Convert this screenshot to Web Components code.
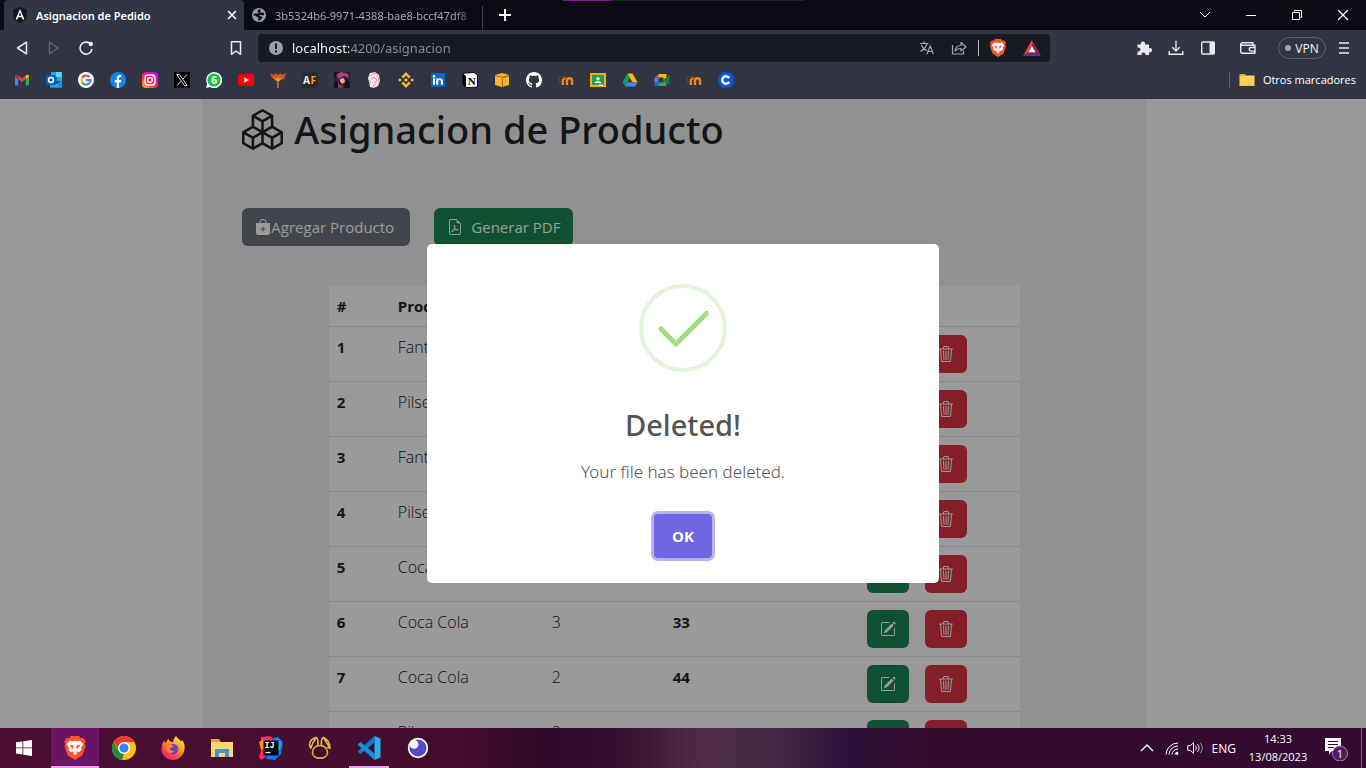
<!DOCTYPE html>
<html lang="es">
<head>
<meta charset="utf-8">
<title>Asignacion de Pedido</title>
<style>
  html, body { margin: 0; height: 100%; }
  body { font-family: "Open Sans", "Noto Sans", sans-serif; overflow: hidden; background: #999; }
</style>
</head>
<body>
<desktop-shell>
  <browser-tabs slot="top"></browser-tabs>
  <browser-toolbar slot="top"></browser-toolbar>
  <bookmark-bar slot="top"></bookmark-bar>
  <app-page slot="page">
    <product-table></product-table>
  </app-page>
  <success-dialog slot="page" heading="Deleted!">Your file has been deleted.</success-dialog>
  <task-bar slot="bottom"></task-bar>
</desktop-shell>

<script>
const ICONS = {
  boxes: ['0 0 16 16', '<path fill="currentColor" d="M7.752.066a.5.5 0 0 1 .496 0l3.75 2.143a.5.5 0 0 1 .252.434v3.995l3.498 2A.5.5 0 0 1 16 9.07v4.286a.5.5 0 0 1-.252.434l-3.75 2.143a.5.5 0 0 1-.496 0l-3.502-2-3.502 2.001a.5.5 0 0 1-.496 0l-3.75-2.143A.5.5 0 0 1 0 13.357V9.071a.5.5 0 0 1 .252-.434L3.75 6.638V2.643a.5.5 0 0 1 .252-.434zM4.25 7.504 1.508 9.071l2.742 1.567 2.742-1.567zM7.5 9.933l-2.75 1.571v3.134l2.75-1.571zm1 3.134 2.75 1.571v-3.134L8.5 9.933zm.508-3.996 2.742 1.567 2.742-1.567-2.742-1.567zm2.242-2.433V3.504L8.5 5.076V8.21zM7.5 8.21V5.076L4.75 3.504v3.134zM5.258 2.643 8 4.21l2.742-1.567L8 1.076zM15 9.933l-2.75 1.571v3.134L15 13.067zM3.75 14.638v-3.134L1 9.933v3.134z"/>'],
  bag: ['0 0 16 16', '<path fill="currentColor" fill-rule="evenodd" d="M10.5 3.5a2.5 2.5 0 0 0-5 0V4h5zm1 0V4H15v10a2 2 0 0 1-2 2H3a2 2 0 0 1-2-2V4h3.500v-.5a3.500 3.500 0 1 1 7 0M8.500 8a.5.5 0 0 0-1 0v1.500H6a.5.5 0 0 0 0 1h1.500V12a.5.5 0 0 0 1 0v-1.500H10a.5.5 0 0 0 0-1H8.500z"/>'],
  pdf: ['0 0 16 16', '<path fill="currentColor" d="M14 14V4.500L9.500 0H4a2 2 0 0 0-2 2v12a2 2 0 0 0 2 2h8a2 2 0 0 0 2-2M9.500 3A1.500 1.500 0 0 0 11 4.500h2V14a1 1 0 0 1-1 1H4a1 1 0 0 1-1-1V2a1 1 0 0 1 1-1h5.500z"/><path fill="none" stroke="currentColor" stroke-width="1" d="M4.900 13c1.200-.8 2.700-3.800 3-5.900.1-1.400-.9-1.400-.7 0 .3 1.900 1.700 3.600 3.300 4.100 1 .3 1-.7 0-.8-1.800 0-3.900.5-5 1.200-1 .6-1.200 1.500-.6 1.400z"/>'],
  edit: ['0 0 16 16', '<path fill="currentColor" d="M15.502 1.940a.5.5 0 0 1 0 .706L14.459 3.690l-2-2L13.502.646a.5.5 0 0 1 .707 0l1.293 1.293zm-1.750 2.456-2-2L4.939 9.210a.5.5 0 0 0-.121.196l-.805 2.414a.25.25 0 0 0 .316.316l2.414-.805a.5.5 0 0 0 .196-.12l6.813-6.814z"/><path fill="currentColor" d="M1 13.500A1.500 1.500 0 0 0 2.500 15h11a1.500 1.500 0 0 0 1.500-1.500v-6a.5.5 0 0 0-1 0v6a.5.5 0 0 1-.5.5h-11a.5.5 0 0 1-.5-.5v-11a.5.5 0 0 1 .5-.5H9a.5.5 0 0 0 0-1H2.500A1.500 1.500 0 0 0 1 2.500z"/>'],
  trash: ['0 0 16 16', '<path fill="currentColor" d="M6.500 1h3a.5.5 0 0 1 .5.5v1H6v-1a.5.5 0 0 1 .5-.5M11 2.500v-1A1.500 1.500 0 0 0 9.500 0h-3A1.500 1.500 0 0 0 5 1.500v1H1.500a.5.5 0 0 0 0 1h.538l.853 10.660A2 2 0 0 0 4.885 16h6.230a2 2 0 0 0 1.994-1.840l.853-10.660h.538a.5.5 0 0 0 0-1zm1.958 1-.846 10.580a1 1 0 0 1-.997.92h-6.230a1 1 0 0 1-.997-.92L3.042 3.500zm-7.487 1a.5.5 0 0 1 .528.47l.5 8.500a.5.5 0 0 1-.998.06L5 5.030a.5.5 0 0 1 .47-.53Zm5.058 0a.5.5 0 0 1 .47.53l-.5 8.500a.5.5 0 1 1-.998-.06l.5-8.500a.5.5 0 0 1 .528-.47M8 4.500a.5.5 0 0 1 .5.5v8.500a.5.5 0 0 1-1 0V5a.5.5 0 0 1 .5-.5"/>'],
  angular: ['0 0 16 16', '<path fill="#12151d" d="M8 0l7 2.500-1 10.500-6 3-6-3L1 2.500z"/><path fill="#fff" d="M8 2L3.500 12.500h1.800l.9-2.300h3.600l.9 2.300h1.800zm0 3.300 1.300 3.400H6.700z"/>'],
  globe: ['0 0 16 16', '<circle cx="8" cy="8" r="7" fill="#9a9da5"/><path fill="#0a0b13" d="M8.800 2.200c-2 .6-2.800 1.600-2.300 2.400.4.700 1.300.5 1.200 1.300-.1.900-1.200.7-2 .6C4.500 6.400 3.500 6.700 2.600 7l-.2 1.500c1.600 0 2.700.3 3.300 1.200.5.700 1.800.6 1.900 1.400.1.800-.8 1.200-.6 2.300l1 .2c1.800-.5 2.400-1.900 3.100-2.700.5-.6.2-1.300-.7-1.500-1-.2-1.900 0-2.100-.8-.1-.7.8-1 1.700-.8.900.3 1.600.9 2.600.5l.7-1c-.3-1.200-.9-1.700-1.500-1.800-.9-.1-1.600.5-2.300 0-.8-.7.200-1.200.200-2z"/>'],
  close: ['0 0 16 16', '<path stroke="currentColor" stroke-width="1.600" d="M4 4l8 8M12 4l-8 8"/>'],
  plus: ['0 0 16 16', '<path stroke="currentColor" stroke-width="2" d="M8 2v12M2 8h12"/>'],
  down: ['0 0 16 16', '<path fill="none" stroke="currentColor" d="M3 5l5 5 5-5"/>'],
  min: ['0 0 16 16', '<path stroke="currentColor" d="M3 8.500h10"/>'],
  restore: ['0 0 16 16', '<path fill="none" stroke="currentColor" d="M5.500 5V3.500h7v7H11M3.500 5.500h7v7h-7z"/>'],
  winclose: ['0 0 16 16', '<path stroke="currentColor" stroke-width="1.200" d="M3 3l10 10M13 3L3 13"/>'],
  back: ['0 0 16 16', '<path fill="none" stroke="currentColor" stroke-width="1.500" stroke-linejoin="round" d="M12.500 2.200v11.600L3.500 8z"/>'],
  forward: ['0 0 16 16', '<path fill="none" stroke="#666977" stroke-width="1.300" stroke-linejoin="round" d="M3.500 2.200v11.600l9-5.800z"/>'],
  reload: ['0 0 16 16', '<path fill="none" stroke="currentColor" stroke-width="1.600" d="M11.500 3.200A6 6 0 1 0 14 8.800"/><circle cx="12.800" cy="4" r="2.200" fill="currentColor"/>'],
  bookmark: ['0 0 16 16', '<path fill="none" stroke="currentColor" stroke-width="1.500" stroke-linejoin="round" d="M3.500 1.700h9v12.600L8 11l-4.500 3.300z"/>'],
  info: ['0 0 16 16', '<circle cx="8" cy="8" r="7" fill="#9da1aa"/><path stroke="#181a21" stroke-width="2" d="M8 3.500v5.500M8 10.500v2"/>'],
  translate: ['0 0 16 16', '<path fill="none" stroke="#a6a8ad" stroke-width="1.200" d="M1 3.500h8.500M5.200 1.500v2M2.500 5c1 3 4 5 5.500 5.500M8 4C7 7.500 4 10 1.500 11.500M8 14l3.200-8 3.200 8M9 11.500h4.500"/>'],
  share: ['0 0 16 16', '<path fill="none" stroke="#a6a8ad" stroke-width="1.200" stroke-linejoin="round" d="M1.500 5v9h11v-3M4 11c.5-3.800 2.500-5.500 6-5.500V2.500L15 7l-5 4V8.500c-3 0-4.500.5-6 2.500z"/>'],
  brave: ['0 0 32 36', '<path fill="#fb542b" d="M10 0h12l3 3.500 3.500-.5L32 8l-1.500 4L32 15l-5 14-11 7-11-7L0 15l1.500-3L0 8l3.500-5 3.500.5z"/><path fill="#fff" d="M8 7l5 1 3-.8 3 .8 5-1 4.500 5.500-3.500 5 1 3.500-4.500 3.500-1-1.500-4.500 3-4.500-3-1 1.500L6 21l1-3.500-3.500-5z"/><path fill="#fb542b" d="M8 13l5 .8 1.200 2.200-1.700 4.500L16 23l3.500-2.500-1.700-4.500 1.200-2.200 5-.8-3 4.500-1.500.5.5 2.500-4 3-4-3 .5-2.500-1.500-.5z"/><path fill="#fff" d="M12.500 26l3.500-2 3.500 2-3.500 3z"/>'],
  bat: ['0 0 18 16', '<path fill="#ff4724" d="M9 0v5.500L5.500 12 0 16z"/><path fill="#9e1f63" d="M9 0l9 16-5.500-4L9 5.500z"/><path fill="#662d91" d="M0 16l5.500-4h7L18 16z"/><path fill="#fff" d="M9 6l3.500 6.200h-7z"/>'],
  puzzle: ['0 0 16 16', '<path fill="currentColor" d="M1.500 4.500H5a2.200 2.200 0 1 1 4 0h4v3.700a2.200 2.200 0 1 1 0 4V15H9.300a1.900 1.900 0 1 0-3.600 0H1.500v-3.700a2 2 0 1 0 0-3.600z"/>'],
  download: ['0 0 16 16', '<path fill="none" stroke="currentColor" stroke-width="1.400" d="M8 .8v10M4.300 7.300 8 11l3.700-3.700M1.200 11v3.300h13.600V11"/>'],
  sidebar: ['0 0 16 16', '<rect x="1.700" y="2" width="12.600" height="12" rx="1" fill="none" stroke="currentColor" stroke-width="1.400"/><path fill="currentColor" d="M9.500 2h5v12h-5z"/>'],
  wallet: ['0 0 16 16', '<path fill="none" stroke="currentColor" stroke-width="1.400" stroke-linejoin="round" d="M13 5V2.800H2.200C.5 2.800.5 5.300 2.200 5.300H15v8H2.500c-1 0-1.800-.5-1.800-1.500V4M15 7.500h-4a1.800 1.800 0 0 0 0 3.600h4z"/>'],
  menu: ['0 0 16 16', '<path stroke="currentColor" stroke-width="1.600" d="M3 3h10M3 8h10M3 13h10"/>'],
  folder: ['0 0 16 16', '<path fill="#e8a33a" d="M.5 2h5.500l1.500 1.800H.5z"/><path fill="#ffd257" d="M.5 3.500h15V14h-15z"/><path fill="#f5bd3d" d="M.5 13h15v1h-15z"/>'],
  gmail: ['0 0 16 16', '<path fill="#4285f4" d="M1 4.500 4.200 7v6.500H2a1 1 0 0 1-1-1z"/><path fill="#34a853" d="M15 4.500 11.800 7v6.500H14a1 1 0 0 0 1-1z"/><path fill="#ea4335" d="M4.200 3.500 8 6.400l3.800-2.900v3.700L8 10 4.200 7.200z"/><path fill="#c5221f" d="M1 4.800c0-2 1.700-2.500 3.200-1.300v3.700L1 4.800z"/><path fill="#fbbc04" d="M15 4.800c0-2-1.700-2.500-3.200-1.300v3.700z"/>'],
  outlook: ['0 0 16 16', '<path fill="#28a8ea" d="M5 0h11v9H5z"/><path fill="#50d9ff" d="M10 0h5.500v5H10z"/><path fill="#0f6cbd" d="M5 5h6v5H5z"/><path fill="#1490df" d="M5 15.500 16 8v7.500z"/><path fill="#28a8ea" d="M4 8l12 7.500H4z"/><rect x="0" y="3" width="10" height="10" rx="1" fill="#0364b8"/><circle cx="5" cy="8" r="2.400" fill="none" stroke="#fff" stroke-width="1.500"/>'],
  google: ['0 0 16 16', '<circle cx="8" cy="8" r="8" fill="#fff"/><g fill="none" stroke-width="2.200"><path stroke="#ea4335" d="M4.100 5.700A4.500 4.500 0 0 1 11.300 5"/><path stroke="#fbbc05" d="M4.100 5.700a4.500 4.500 0 0 0 0 4.600"/><path stroke="#34a853" d="M4.100 10.300a4.500 4.500 0 0 0 6.800 1.200"/><path stroke="#4285f4" d="M10.900 11.500A4.500 4.500 0 0 0 12.500 8.100H8"/></g>'],
  facebook: ['0 0 16 16', '<circle cx="8" cy="8" r="8" fill="#1184f4"/><path fill="#fff" d="M6.800 16v-5.500H4.900V8h1.900V6.300c0-2.200 1.200-3.300 3-3.300.8 0 1.400.1 1.400.1v2h-1c-1 0-1.200.6-1.200 1.200V8h2.200l-.4 2.500H9V16z"/>'],
  instagram: ['0 0 16 16', '<defs><linearGradient id="g" x1="0" y1="1" x2=".8" y2="0"><stop offset="0" stop-color="#ffc91f"/><stop offset=".4" stop-color="#ff3d3d"/><stop offset=".7" stop-color="#f50a9b"/><stop offset="1" stop-color="#b414ee"/></linearGradient></defs><rect width="16" height="16" rx="4" fill="url(#g)"/><rect x="3" y="3" width="10" height="10" rx="3" fill="none" stroke="#fff" stroke-width="1.300"/><circle cx="8" cy="8" r="2.400" fill="none" stroke="#fff" stroke-width="1.300"/><circle cx="11" cy="5" r=".7" fill="#fff"/>'],
  x: ['0 0 16 16', '<path fill="#000" d="M0 0h16v16H0z"/><path fill="none" stroke="#ddd" d="M2.800 2.500h2.700l7.700 11h-2.700zM12.800 2.500 9 7M7 9.200l-4 4.300"/>'],
  whatsapp: ['0 0 16 16', '<path fill="#fff" d="M0 16l1.200-4A8 8 0 1 1 4 14.900z"/><circle cx="8" cy="8" r="6.600" fill="#1fbf4c"/><text x="8" y="11.500" text-anchor="middle" font-size="10" font-weight="700" fill="#fff">6</text>'],
  youtube: ['0 0 16 16', '<rect y="2" width="16" height="12" rx="3" fill="#f00"/><path fill="#fff" d="M6.300 5.300 11 8l-4.700 2.700z"/>'],
  palm: ['0 0 16 16', '<path fill="#d9541e" d="M0 1l4 2 1.500-2L8 3l2.500-2L12 3l4-2-2 6-4 1-1 1.500V16H7V9.500L5 8 2 6z"/><path fill="#f59a23" d="M3 5l4 2 1-3 1.500 3L13 5l-4 4H7z"/>'],
  af: ['0 0 16 16', '<rect width="16" height="16" rx="3" fill="#2b2b2b"/><text x="1" y="12" font-size="10" font-weight="700" fill="#eee">A</text><text x="8.500" y="12" font-size="10" font-weight="700" fill="#ffa01e">F</text>'],
  anime: ['0 0 16 16', '<path fill="#3b1a35" d="M0 0h16v16H0z"/><path fill="#a34a75" d="M2 3l5-3 7 2 1 4-5-2-5 3z"/><path fill="#e0a9a6" d="M6 7l4-1 1 4-3 2-2-3z"/><path fill="#181022" d="M0 9l4 1 2 6H0zM12 8l4 2v6h-6zM0 0h3l-1 5-2 2z"/><path fill="#8d2f55" d="M4 7l1 5 4 2-1 2H4z"/>'],
  girl: ['0 0 16 16', '<path fill="#f7e9e6" d="M4 1l5-1 4 3 1 6-2 5-4 2-4-1-1-5-1-4z"/><path fill="none" stroke="#e27b78" stroke-width=".8" d="M4 4l5-3 3 4M5 7l3-2 3 3-2 3M3 8l2 4M10 12l-3 2 2 2M12 5l1 6"/>'],
  binance: ['0 0 16 16', '<g fill="#f3ba2f"><path d="M8 0l4.700 4.700-1.800 1.800L8 3.600 5.100 6.500 3.300 4.700zM8 16l4.700-4.700-1.800-1.800L8 12.400 5.100 9.500l-1.800 1.800zM8 6l2 2-2 2-2-2zM1.800 6.200 3.600 8 1.800 9.800 0 8zM14.200 6.200 16 8l-1.800 1.800L12.400 8z"/></g>'],
  linkedin: ['0 0 16 16', '<rect x="1" y="1" width="14" height="14" rx="1" fill="#0a66c2"/><path fill="#fff" d="M3 6.300h2v6.400H3zM6.300 6.300h2v1c1.200-1.900 4.600-1.500 4.600 1.600v3.800h-2V9.400c0-2-2.600-1.800-2.600 0v3.300h-2z"/><circle cx="4" cy="4.200" r="1.200" fill="#fff"/>'],
  notion: ['0 0 16 16', '<path fill="#fff" stroke="#000" d="M.8 1.200 12 .5l3.500 2.500v11.800l-11 .7-3.700-3.500z"/><path fill="#000" d="M1 1.500 4 4.200v11L1 12z"/><path fill="#fff" d="M4.500 4.500 15 4v10.500l-10.500.6z"/><text x="9.700" y="13" text-anchor="middle" font-family="Liberation Serif, serif" font-size="11" font-weight="700" fill="#000">N</text>'],
  cube: ['0 0 16 16', '<path fill="#f5b52b" d="M1 3l7-2 7 2v10l-7 2-7-2z"/><path fill="#a66a12" d="M8 5.500 15 4v9l-7 2z"/><path fill="#f5b52b" d="M9 6l6-1.200v7.900L9 14.300z"/><path stroke="#a66a12" d="M1 3.700l7 1.500 7-1.500" fill="none"/>'],
  github: ['0 0 16 16', '<path fill="#fff" d="M8 0C3.580 0 0 3.580 0 8c0 3.540 2.290 6.530 5.470 7.590.4.07.55-.17.55-.38 0-.19-.01-.82-.01-1.490-2.010.37-2.530-.49-2.690-.94-.09-.23-.48-.94-.82-1.130-.28-.15-.68-.52-.01-.53.63-.01 1.080.58 1.230.82.72 1.210 1.870.87 2.330.66.07-.52.28-.87.51-1.070-1.780-.2-3.640-.89-3.640-3.950 0-.87.31-1.590.82-2.150-.08-.2-.36-1.020.08-2.120 0 0 .67-.21 2.200.82.64-.18 1.320-.27 2-.27s1.360.09 2 .27c1.530-1.040 2.200-.82 2.200-.82.44 1.100.16 1.920.08 2.120.51.56.82 1.270.82 2.150 0 3.070-1.870 3.750-3.650 3.950.29.25.54.73.54 1.480 0 1.070-.01 1.930-.01 2.200 0 .21.15.46.55.38A8.010 8.010 0 0 0 16 8c0-4.420-3.580-8-8-8"/>'],
  moodle: ['0 0 16 16', '<path fill="none" stroke="#f98012" stroke-width="2.400" d="M4.800 13V7M9 13V8.500c0-3 5-3 5 0V13M5 6.500h2.500"/><path fill="#42413f" d="M0 5.500 7 3l1 1.200-4.500 2.300-2.500-.3z"/><path stroke="#555" stroke-width=".7" d="M1.500 6v4"/>'],
  classroom: ['0 0 16 16', '<path fill="#f4b400" d="M0 1h16v14H0z"/><path fill="#289b58" d="M2 3h12v10H2z"/><circle cx="8" cy="6.700" r="1.700" fill="#fff"/><path fill="#fff" d="M4.500 11c0-2.500 7-2.500 7 0z"/><path fill="#e8e8e8" d="M9 12.500h4V14H9z"/>'],
  drive: ['0 0 16 16', '<path fill="#0f9d58" d="M5.500 1.500 8 5.700 3 14.300.5 10.200z"/><path fill="#ffba00" d="M5.500 1.500h5l5 8.700h-5z"/><path fill="#4285f4" d="M5.500 10.200h10L13 14.500H3z"/>'],
  meet: ['0 0 16 16', '<path fill="#ea4335" d="M4.500 2v4H.5z"/><path fill="#fbbc04" d="M4.500 2h8v3.500L9.500 8V5.500h-5z"/><path fill="#4285f4" d="M.5 5.500h4v5h-4z"/><path fill="#1967d2" d="M.5 10.500h4V14h-3c-1 0-1-1-1-1z"/><path fill="#34a853" d="M4.500 10.500h5V8l3 2.500V14h-8z"/><path fill="#188038" d="M9.500 8l3-2.700v5.400zM12.500 5.500 15.500 3v10l-3-2.500z"/>'],
  coin: ['0 0 16 16', '<circle cx="8" cy="8" r="8" fill="#0a57dc"/><path fill="none" stroke="#fff" stroke-width="2.400" d="M11.200 6.200a3.700 3.700 0 1 0 0 3.600"/>'],
  windows: ['0 0 16 16', '<path fill="#fff" d="M0 2.300 6.500 1.400v6.100H0zM7.300 1.300 16 0v7.500H7.300zM0 8.300h6.500v6.200L0 13.600zM7.300 8.300H16V16l-8.700-1.300z"/>'],
  chrome: ['0 0 24 24', '<circle cx="12" cy="12" r="12" fill="#fbc116"/><path fill="#e33b2e" d="M1.600 6A12 12 0 0 1 22.400 6H12L8 15z"/><path fill="#1e8e3e" d="M1.600 6 7 15l5 3-2 5.900A12 12 0 0 1 1.600 6z"/><circle cx="12" cy="12" r="6" fill="#fff"/><circle cx="12" cy="12" r="4.600" fill="#3b82ea"/>'],
  firefox: ['0 0 24 24', '<defs><linearGradient id="f" x1=".8" y1="0" x2=".2" y2="1"><stop offset="0" stop-color="#fff04a"/><stop offset=".4" stop-color="#ff9a1f"/><stop offset=".75" stop-color="#ff3d4d"/><stop offset="1" stop-color="#e0178c"/></linearGradient></defs><path fill="url(#f)" d="M15 0c1 2 4 3.500 5 5.500.8 0 1-1 .8-2C23.500 7 24 10 23.500 13.500 22.500 19.500 18 24 12 24 5.500 24 .5 19 .5 13c0-4 1.500-6.500 3-8.500l.8 2.700C5.500 6 6 4 7.500 2.500 7.500 4.500 9 6 12 6.300 12.500 3.500 13.500 1.500 15 0z"/><circle cx="12" cy="13" r="5.300" fill="#6a43c4"/><path fill="#ff8a1e" d="M5.500 8.500c3-1 5 0 7 1.500-1 1.500-3 1-3.500 2.500-.3 1.500 1.500 3 4.500 2.500-2 3-8 2.500-8.500-2z"/>'],
  explorer: ['0 0 24 24', '<path fill="#e2a53a" d="M1 3h8l2 3H1z"/><path fill="#ffd968" d="M1 6h22v15H1z"/><path fill="#3f95d8" d="M5 13h14v8h-4v-4H9v4H5z"/>'],
  intellij: ['0 0 24 24', '<path fill="#fe2c6a" d="M2 1l9-1 4 4-7 16-6 4-2-3 2-7z"/><path fill="#ff8d1b" d="M0 6l5-3 3 9-6 2z"/><path fill="#087cfa" d="M14 2l5-1 5 5-2 12-6 6-9-1 2-5z"/><path fill="#17b8e8" d="M17 3l5 3-1 8-4 2z"/><path fill="#000" d="M4.500 4.500h15v15h-15z"/><text x="5.500" y="12.200" font-family="Liberation Mono, monospace" font-size="8.500" font-weight="700" fill="#fff">IJ</text><path fill="#fff" d="M6.500 16h5v1.200h-5z"/>'],
  navicat: ['0 0 24 24', '<g fill="none" stroke="#e5b43b" stroke-width="1.600"><path d="M12 9.500c-4.500 0-7.500 3-7.500 7 0 7.500 15 7.500 15 0 0-4-3-7-7.500-7z"/><path d="M3 12.500C-.5 7.500 3 2.500 8.500 1.500c2 2 1.800 5 1 8M3 12.500c.5-4 2-6.500 5.500-11M13.500 9.500c-.5-4.500 0-7 2-8 4 1.800 6.500 6 6.500 10.500l-3-.5M15.500 1.500c2 3.500 3.500 6 6.500 10.500"/></g>'],
  vscode: ['0 0 24 24', '<path fill="#0a7fd0" d="M17.500 0v6.500L3.500 18 .5 15.500z"/><path fill="#1390de" d="M3.500 6 17.500 17.500V24L.5 8.500z"/><path fill="#2aabf2" d="M17.500 0 23.500 2.500v19L17.500 24z"/>'],
  insomnia: ['0 0 24 24', '<circle cx="12" cy="12" r="10.200" fill="#fff"/><circle cx="12" cy="12" r="8.500" fill="#5849be"/><circle cx="8" cy="8.300" r="4.400" fill="#fff"/>'],
  up: ['0 0 16 16', '<path fill="none" stroke="#fff" stroke-width="1.400" d="M2 11l6-6 6 6"/>'],
  wifi: ['0 0 16 16', '<g fill="none" stroke="#fff"><path d="M2 14.500A12 12 0 0 1 14 3M5 14.500A9 9 0 0 1 14 6M8 14.500A6 6 0 0 1 14 9M10.800 14.500A3.500 3.500 0 0 1 14 12"/></g><circle cx="13" cy="13.500" r="1.400" fill="#fff"/>'],
  speaker: ['0 0 16 16', '<g fill="none" stroke="#fff"><path d="M.7 5.700h2.500l3.300-3v10.600l-3.300-3H.7zM8.500 5.800c1 1.400 1 3 0 4.400M10.500 4.200c2 2.500 2 5 0 7.600"/><path stroke="#999" d="M13 2.500c3 3.600 3 7.400 0 11"/></g>'],
  notice: ['0 0 26 26', '<path fill="#fff" d="M2 3h16v13h-9l-3 3.500V16H2z"/><path stroke="#330b30" d="M5 6.500h10M5 9.500h10M5 12.500h6"/><circle cx="17" cy="18.500" r="7.500" fill="#571863" stroke="#a58aab"/><text x="17" y="22.500" text-anchor="middle" font-size="11" fill="#fff">1</text>']
};

function define(name, html, setup) {
  const tpl = document.createElement('template');
  tpl.innerHTML = '<style>:host,*{box-sizing:border-box}button{font:inherit;color:inherit;background:none;border:0;padding:0;margin:0}a{color:inherit;text-decoration:none}</style>' + html;
  customElements.define(name, class extends HTMLElement {
    connectedCallback() {
      if (this.shadowRoot) return;
      const root = this.attachShadow({ mode: 'open' });
      root.append(tpl.content.cloneNode(true));
      if (setup) setup(this, root);
    }
  });
}

define('ui-icon', `<style>
  :host { display: block; width: 16px; height: 16px; flex: none; }
  svg { display: block; width: 100%; height: 100%; font-family: "Open Sans", sans-serif; }
</style>`, (host, root) => {
  const [box, body] = ICONS[host.getAttribute('name')];
  root.innerHTML += `<svg viewBox="${box}" aria-hidden="true">${body}</svg>`;
});

define('desktop-shell', `<style>
  :host { display: flex; flex-direction: column; height: 100vh; }
  main { flex: 1; min-height: 0; overflow: hidden; position: relative; background: #fff; }
</style>
<slot name="top"></slot><main><slot name="page"></slot></main><slot name="bottom"></slot>`);

define('browser-tabs', `<style>
  :host { display: flex; height: 30px; padding-left: 4px; background: linear-gradient(90deg, #7c1a8c 48px, #20221f 48px) 563px 0 / 241px 1px no-repeat #0a0b13; color: #fff; font-size: 11px; }
  .tab { display: flex; align-items: center; gap: 8px; width: 240px; padding: 0 4px 0 8px; white-space: nowrap; }
  .active { background: #323644; border-radius: 4px 4px 0 0; font-family: "Noto Sans", sans-serif; font-weight: 600; }
  .idle { color: #a7a8ac; border-image: linear-gradient(#0a0b13 7px, #44454b 7px 28px, #0a0b13 28px) 1; border-right: 1px solid; width: 239px; padding: 0 4px 0 7px; font-family: "Noto Sans", sans-serif; }
  .idle span { flex: 1; mask-image: linear-gradient(90deg, #000 88%, transparent); }
  .tab button { margin-left: auto; height: 16px; }
  .new { width: 44px; display: grid; place-items: center; }
  .win { margin-left: auto; display: flex; }
  .win button { width: 46px; display: grid; place-items: center; }
</style>
<div class="tab active"><ui-icon name="angular"></ui-icon><span>Asignacion de Pedido</span><button aria-label="Cerrar"><ui-icon name="close"></ui-icon></button></div>
<div class="tab idle"><ui-icon name="globe"></ui-icon><span>3b5324b6-9971-4388-bae8-bccf47df8</span></div>
<button class="new" aria-label="Nueva"><ui-icon name="plus"></ui-icon></button>
<div class="win"><button aria-label="Buscar"><ui-icon name="down"></ui-icon></button><button aria-label="Minimizar"><ui-icon name="min"></ui-icon></button><button aria-label="Restaurar"><ui-icon name="restore"></ui-icon></button><button aria-label="Cerrar"><ui-icon name="winclose"></ui-icon></button></div>`);

define('browser-toolbar', `<style>
  :host { display: flex; align-items: center; height: 36px; background: #323644; color: #e9e9ec; }
  button { display: block; }
  nav { display: flex; gap: 16px; width: 258px; padding: 0 14px; }
  nav button:last-child { margin-left: auto; }
  .address { flex: 1; display: flex; align-items: center; height: 28px; padding: 0 9px 0 10px; border-radius: 4px; background: #181a21; }
  input { flex: 1; min-width: 0; margin: 0 8px; padding: 0; border: 0; outline: 0; font: 13px/20px "Noto Sans", sans-serif; color: #fff; background: linear-gradient(90deg, #fff 57px, #8c8e94 57px) text; -webkit-text-fill-color: transparent; }
  .actions { display: flex; gap: 16px; align-items: center; }
  hr { width: 1px; height: 16px; border: 0; margin: 0; background: #b8babf; }
  .group { display: flex; align-items: center; gap: 11px; }
  .group .brave { height: 18px; }
  .group .bat { width: 18px; margin-left: 6px; }
  .tools { display: flex; gap: 16px; width: 316px; padding-right: 14px; justify-content: flex-end; align-items: center; }
  .wallet { margin: 0 6px 0 8px; }
  .vpn { display: flex; align-items: center; justify-content: center; gap: 4px; width: 48px; height: 22px; border: 1px solid #5c6070; border-radius: 11px; font-size: 12px; color: #f2f2f4; margin-right: -6px; }
  .vpn::before { content: ""; width: 6px; height: 6px; border-radius: 50%; background: #a4a6b4; }
</style>
<nav><button aria-label="Atras"><ui-icon name="back"></ui-icon></button><button aria-label="Adelante"><ui-icon name="forward"></ui-icon></button><button aria-label="Recargar"><ui-icon name="reload"></ui-icon></button><button aria-label="Marcador"><ui-icon name="bookmark"></ui-icon></button></nav>
<div class="address"><ui-icon name="info"></ui-icon><input aria-label="Direccion" value="localhost:4200/asignacion">
<div class="actions"><ui-icon name="translate"></ui-icon><div class="group"><ui-icon name="share"></ui-icon><hr><ui-icon class="brave" name="brave"></ui-icon><ui-icon class="bat" name="bat"></ui-icon></div></div></div>
<div class="tools"><button aria-label="Extensiones"><ui-icon name="puzzle"></ui-icon></button><button aria-label="Descargas"><ui-icon name="download"></ui-icon></button><button aria-label="Panel"><ui-icon name="sidebar"></ui-icon></button><button class="wallet" aria-label="Cartera"><ui-icon name="wallet"></ui-icon></button><button class="vpn">VPN</button><button aria-label="Menu"><ui-icon name="menu"></ui-icon></button></div>`);

define('bookmark-bar', `<style>
  :host { display: flex; align-items: center; height: 33px; padding: 0 10px 5px 14px; background: #323644; color: #fff; font-size: 12px; }
  nav { display: flex; gap: 16px; }
  nav a { height: 16px; }
  .other { display: flex; align-items: center; gap: 8px; margin-left: auto; padding-left: 9px; height: 16px; border-left: 1px solid #5f6371; font-size: 11px; line-height: 16px; }
</style>
<nav></nav><a class="other" href="#"><ui-icon name="folder"></ui-icon>Otros marcadores</a>`, (host, root) => {
  const names = ['gmail','outlook','google','facebook','instagram','x','whatsapp','youtube','palm','af','anime','girl','binance','linkedin','notion','cube','github','moodle','classroom','drive','meet','moodle','coin'];
  root.querySelector('nav').innerHTML = names.map(n => `<a href="#" aria-label="${n}"><ui-icon name="${n}"></ui-icon></a>`).join('');
});

define('app-page', `<style>
  :host { display: block; padding-right: 17px; color: #212529; }
  .panel { width: 70%; margin: 0 auto; padding: 6px 40px 40px; background: #f2f2f2; }
  h1 { display: flex; align-items: center; gap: 11px; margin: 0 0 55px; font-family: "Noto Sans", sans-serif; font-size: 38px; line-height: 48px; font-weight: 500; white-space: nowrap; }
  h1 ui-icon { width: 41px; height: 41px; }
  .bar { display: flex; gap: 24px; margin-bottom: 40px; }
  button { display: flex; align-items: center; height: 38px; padding: 0 13px; border-radius: 6px; color: #fff; font-size: 15px; font-weight: 400; white-space: nowrap; }
  .add { background: #6c757d; min-width: 168px; }
  .pdf { background: #198754; gap: 8px; }
  .holder { width: 80%; margin: 0 auto; }
</style>
<section class="panel">
  <h1><ui-icon name="boxes"></ui-icon>Asignacion de Producto</h1>
  <div class="bar"><button class="add"><ui-icon name="bag"></ui-icon>Agregar Producto</button><button class="pdf"><ui-icon name="pdf"></ui-icon>Generar PDF</button></div>
  <div class="holder"><slot></slot></div>
</section>`);

define('product-table', `<style>
  :host { display: block; }
  table { width: 100%; table-layout: fixed; border-collapse: separate; border-spacing: 0; background: #fff; font-size: 15px; line-height: 24px; }
  th, td { padding: 8px; border-bottom: 1px solid #dee2e6; text-align: left; vertical-align: top; font-weight: 300; }
  td { font-size: 16px; }
  th, td.total { font-size: 15px; font-weight: 700; }
  .num { width: 61px; } .product { width: 154px; } .count { width: 121px; } .total { width: 194px; }
  .ops { display: flex; gap: 16px; }
  button { display: grid; place-items: center; width: 42px; height: 38px; border-radius: 6px; color: #fff; }
  .edit { background: #198754; } .del { background: #dc3545; }
</style>
<table><thead><tr><th class="num">#</th><th class="product">Producto</th><th class="count"></th><th class="total"></th><th></th></tr></thead><tbody></tbody></table>`, (host, root) => {
  const rows = [['Fanta'], ['Pilsen'], ['Fanta'], ['Pilsen'], ['Coca Cola'], ['Coca Cola', 3, 33], ['Coca Cola', 2, 44], ['Pilsen', 2, 44]];
  root.querySelector('tbody').innerHTML = rows.map(([name, count = '', total = ''], i) => `<tr><th>${i + 1}</th><td>${name}</td><td>${count}</td><td class="total">${total}</td><td><div class="ops"><button class="edit" aria-label="Editar"><ui-icon name="edit"></ui-icon></button><button class="del" aria-label="Eliminar"><ui-icon name="trash"></ui-icon></button></div></td></tr>`).join('');
});

define('success-dialog', `<style>
  :host { position: absolute; inset: 0; display: grid; place-items: center; background: rgba(0, 0, 0, .4); }
  .box { display: flex; flex-direction: column; align-items: center; width: 512px; max-width: 100%; padding: 40px 20px 25px; border-radius: 5px; background: #fff; color: #545454; }
  svg { width: 88px; height: 88px; }
  h2 { margin: 35px 0 15px; font-family: "Noto Sans", sans-serif; font-size: 29px; line-height: 36px; font-weight: 500; }
  p { margin: 0 0 28px; font-family: "Noto Sans", sans-serif; font-size: 17px; line-height: 28px; font-weight: 300; }
  button { width: 58px; height: 44px; border-radius: 4px; background: #7066e0; box-shadow: 0 0 0 3px #b8b3f0; color: #fff; font-size: 15px; font-weight: 700; }
</style>
<div class="box" role="dialog" aria-labelledby="t">
  <svg viewBox="0 0 88 88" aria-hidden="true"><circle cx="44" cy="44" r="42" fill="none" stroke="#e4f4db" stroke-width="4"/><path d="M22 45l15 15 30.500-30.500" fill="none" stroke="#a5dc86" stroke-width="5" stroke-linecap="round" stroke-linejoin="round"/></svg>
  <h2 id="t"></h2><p><slot></slot></p><button>OK</button>
</div>`, (host, root) => { root.querySelector('h2').textContent = host.getAttribute('heading'); });

define('task-bar', `<style>
  :host { display: flex; justify-content: space-between; height: 40px; color: #fff; font-size: 12px; background: linear-gradient(90deg, #4a0f30, #430c2d 34%, #2d0a27 40%, #320f2c 45%, #50304a 52%, #432642 57%, #2b1237 62%, #330b2d 69%, #330b30); }
  .apps { display: flex; gap: 1px; }
  .apps button { width: 48px; display: grid; place-items: center; }
  .apps ui-icon { width: 24px; height: 24px; }
  .apps .start { margin-right: 2px; }
  .apps .start ui-icon { width: 16px; height: 16px; }
  .apps .current { background: linear-gradient(#6b1464 38px, #e8a0f0 38px); }
  .apps .open { background: linear-gradient(#e8a0f0, #e8a0f0) center bottom / 40px 2px no-repeat; }
  .tray { display: flex; align-items: center; padding-right: 4px; }
  .tray .sys { display: flex; align-items: center; gap: 7px; }
  .sys ui-icon:first-child { margin-right: 2px; }
  .sys span { margin-left: 2px; }
  time { width: 84px; text-align: center; line-height: 18px; font-size: 11px; }
  .notice { width: 42px; height: 40px; display: grid; place-items: center start; padding-left: 3px; border-right: 1px solid #7d6280; }
  .notice ui-icon { width: 26px; height: 26px; }
</style>
<div class="apps"></div>
<div class="tray"><div class="sys"><ui-icon name="up"></ui-icon><ui-icon name="wifi"></ui-icon><ui-icon name="speaker"></ui-icon><span>ENG</span></div><time>14:33<br>13/08/2023</time><button class="notice" aria-label="Notificaciones"><ui-icon name="notice"></ui-icon></button></div>`, (host, root) => {
  const apps = [['windows', 'start'], ['brave', 'current'], ['chrome'], ['firefox'], ['explorer'], ['intellij'], ['navicat'], ['vscode', 'open'], ['insomnia']];
  root.querySelector('.apps').innerHTML = apps.map(([n, c = '']) => `<button class="${c}" aria-label="${n}"><ui-icon name="${n}"></ui-icon></button>`).join('');
});
</script>
</body>
</html>
